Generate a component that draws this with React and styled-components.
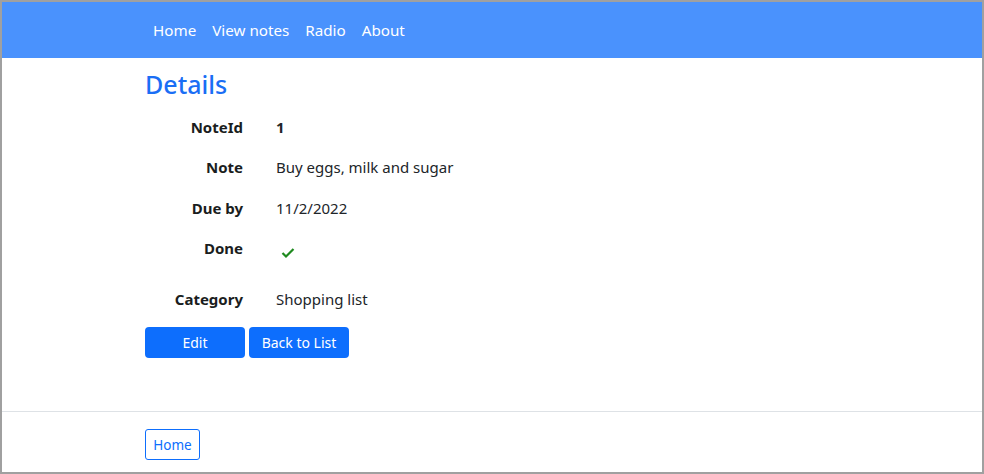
import React from 'react';
import styled, { createGlobalStyle } from 'styled-components';

const Global = createGlobalStyle`
  html, body { margin: 0; padding: 0; }
  body {
    font-family: "Noto Sans", "Open Sans", sans-serif;
    font-size: 16px;
    color: #212529;
    background: #fff;
  }
  * { box-sizing: border-box; }
`;

const Frame = styled.div`
  height: 100vh;
  border: 2px solid #a0a0a0;
  display: flex;
  flex-direction: column;
  overflow: hidden;
`;

const NavBar = styled.nav`
  height: 56px;
  background: #4a92fd;
  display: flex;
  align-items: center;
  padding-left: 143px;
`;

const NavLink = styled.a`
  color: #fff;
  font-size: 15.2px;
  padding: 0 8px;
  text-decoration: none;
`;

const Main = styled.main`
  padding-left: 143px;
  flex: 1;
`;

const Title = styled.h2`
  margin: 8px 0 13px;
  font-size: 25px;
  font-weight: 500;
  color: #1a6ef5;
  line-height: 36px;
`;

const Details = styled.dl`
  display: grid;
  grid-template-columns: 98px 1fr;
  column-gap: 33px;
  row-gap: 16px;
  margin: 0 0 16px;
`;

const Term = styled.dt`
  font-weight: 700;
  text-align: right;
  line-height: 24.3px;
  font-size: 15px;
  color: #1a1d20;
`;

const Value = styled.dd`
  margin: 0;
  line-height: 24.3px;
  font-size: 15px;
  font-weight: ${p => (p.$bold ? 700 : 400)};
  height: ${p => (p.$tall ? '35px' : 'auto')};
  padding: ${p => (p.$tall ? '11px 0 0 5px' : '0')};
`;

const Actions = styled.div`
  display: flex;
  gap: 4px;
`;

const Button = styled.a`
  width: 100px;
  height: 31px;
  display: flex;
  align-items: center;
  justify-content: center;
  background: #0d6efd;
  color: #fff;
  font-size: 14px;
  border-radius: 4px;
  text-decoration: none;
`;

const Footer = styled.footer`
  border-top: 1px solid #dee2e6;
  height: 61px;
  padding: 17px 0 0 143px;
`;

const OutlineButton = styled.a`
  display: inline-flex;
  align-items: center;
  justify-content: center;
  width: 55px;
  height: 31px;
  border: 1px solid #0d6efd;
  border-radius: 3px;
  color: #0d6efd;
  font-size: 13.5px;
  text-decoration: none;
`;

const Check = () => (
  <svg width="14" height="12" viewBox="0 0 14 12" style={{ display: 'block' }}>
    <polyline points="1.5,6 5,9.5 12.5,2" fill="none" stroke="#1f8a1f" strokeWidth="2.2" />
  </svg>
);

export default function App() {
  return (
    <Frame>
      <Global />
      <NavBar>
        <NavLink>Home</NavLink>
        <NavLink>View notes</NavLink>
        <NavLink>Radio</NavLink>
        <NavLink>About</NavLink>
      </NavBar>
      <Main>
        <Title>Details</Title>
        <Details>
          <Term>NoteId</Term>
          <Value $bold>1</Value>
          <Term>Note</Term>
          <Value>Buy eggs, milk and sugar</Value>
          <Term>Due by</Term>
          <Value>11/2/2022</Value>
          <Term>Done</Term>
          <Value $tall><Check /></Value>
          <Term>Category</Term>
          <Value>Shopping list</Value>
        </Details>
        <Actions>
          <Button>Edit</Button>
          <Button>Back to List</Button>
        </Actions>
      </Main>
      <Footer>
        <OutlineButton>Home</OutlineButton>
      </Footer>
    </Frame>
  );
}
